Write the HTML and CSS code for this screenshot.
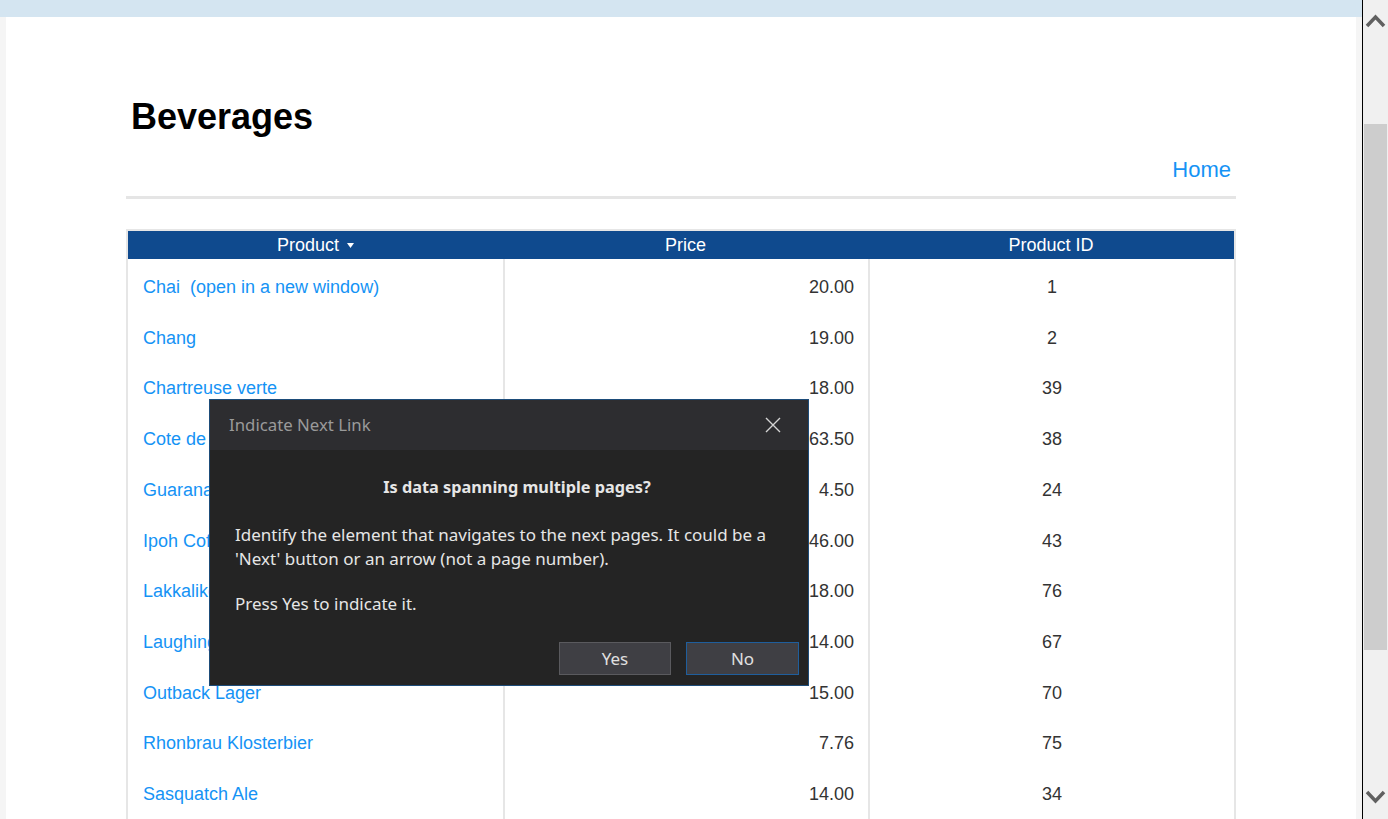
FILE: index.html
```html
<!DOCTYPE html>
<html lang="en">
<head>
<meta charset="utf-8">
<title>Beverages</title>
<link rel="stylesheet" href="styles.css">
</head>
<body>
<div class="window">
  <div class="viewport">
    <div class="topbar"></div>
    <div class="frame">
      <div class="sheet">
        <div class="page">
          <h1 class="title">Beverages</h1>
          <div class="nav"><a class="home" href="#">Home</a></div>
          <div class="rule"></div>
          <div class="grid">
            <div class="hcell">Product<svg class="sort" width="7" height="5" viewBox="0 0 7 5"><path d="M0 0 L7 0 L3.5 5 Z" fill="#fff"/></svg></div>
            <div class="hcell">Price</div>
            <div class="hcell">Product ID</div>

            <div class="cell name"><a href="#">Chai&nbsp; (open in a new window)</a></div><div class="cell price">20.00</div><div class="cell pid">1</div>
            <div class="cell name"><a href="#">Chang</a></div><div class="cell price">19.00</div><div class="cell pid">2</div>
            <div class="cell name"><a href="#">Chartreuse verte</a></div><div class="cell price">18.00</div><div class="cell pid">39</div>
            <div class="cell name"><a href="#">Cote de Blaye</a></div><div class="cell price">263.50</div><div class="cell pid">38</div>
            <div class="cell name"><a href="#">Guarana Fantastica</a></div><div class="cell price">4.50</div><div class="cell pid">24</div>
            <div class="cell name"><a href="#">Ipoh Coffee</a></div><div class="cell price">46.00</div><div class="cell pid">43</div>
            <div class="cell name"><a href="#">Lakkalikoori</a></div><div class="cell price">18.00</div><div class="cell pid">76</div>
            <div class="cell name"><a href="#">Laughing Lumberjack Lager</a></div><div class="cell price">14.00</div><div class="cell pid">67</div>
            <div class="cell name"><a href="#">Outback Lager</a></div><div class="cell price">15.00</div><div class="cell pid">70</div>
            <div class="cell name"><a href="#">Rhonbrau Klosterbier</a></div><div class="cell price">7.76</div><div class="cell pid">75</div>
            <div class="cell name"><a href="#">Sasquatch Ale</a></div><div class="cell price">14.00</div><div class="cell pid">34</div>
            <div class="cell name"></div><div class="cell price"></div><div class="cell pid"></div>
          </div>
        </div>
      </div>
    </div>
  </div>
  <div class="divider"></div>
  <div class="scrollbar">
    <div class="sb-btn">
      <svg width="25" height="40" viewBox="0 0 25 40"><path d="M4 26 L12.5 17 L21 26" fill="none" stroke="#606060" stroke-width="3.5"/></svg>
    </div>
    <div class="thumb"></div>
    <div class="sb-fill"></div>
    <div class="sb-btn">
      <svg width="25" height="40" viewBox="0 0 25 40"><path d="M4 13 L12.5 22 L21 13" fill="none" stroke="#606060" stroke-width="3.5"/></svg>
    </div>
  </div>
</div>

<div class="dialog">
  <div class="dlg-title">
    <span>Indicate Next Link</span>
    <svg class="dlg-close" width="16" height="16" viewBox="0 0 16 16"><path d="M1 1 L15 15 M15 1 L1 15" stroke="#d4d4d4" stroke-width="1.4" fill="none"/></svg>
  </div>
  <div class="dlg-body">
    <p class="dlg-q">Is data spanning multiple pages?</p>
    <p class="dlg-text">Identify the element that navigates to the next pages. It could be a 'Next' button or an arrow (not a page number).</p>
    <p class="dlg-text dlg-press">Press Yes to indicate it.</p>
    <div class="dlg-actions">
      <button class="btn">Yes</button>
      <button class="btn btn-primary">No</button>
    </div>
  </div>
</div>
</body>
</html>
```

FILE: styles.css
```css
* { box-sizing: border-box; }

html, body {
  margin: 0;
  padding: 0;
  height: 819px;
  overflow: hidden;
  background: #ffffff;
  font-family: "Liberation Sans", Arial, sans-serif;
}

.window {
  display: flex;
  width: 1388px;
  height: 819px;
}

.viewport {
  width: 1362px;
  display: flex;
  flex-direction: column;
  overflow: hidden;
}

.topbar {
  height: 17px;
  background: #d4e5f1;
  flex: none;
}

.frame {
  flex: 1;
  background: #f5f5f5;
  padding: 0 6px;
  display: flex;
  overflow: hidden;
}

.sheet {
  flex: 1;
  background: #ffffff;
  padding-top: 79.5px;
  padding-left: 120px;
}

.page {
  width: 1110px;
}

.title {
  margin: 0;
  padding-left: 5px;
  font-size: 36px;
  line-height: 40px;
  font-weight: bold;
  color: #000;
}

.nav {
  margin-top: 20px;
  text-align: right;
  padding-right: 5px;
  line-height: 26px;
  height: 26px;
}

.home {
  font-size: 22px;
  color: #1593f5;
  text-decoration: none;
}

.rule {
  margin-top: 13.6px;
  height: 3px;
  background: #e5e5e5;
}

.grid {
  margin-top: 30px;
  display: grid;
  grid-template-columns: 375px 365px 366px;
  border: 2px solid #e6e6e6;
  border-bottom: none;
  width: 1110px;
}

.hcell {
  height: 28px;
  background: #0f4a8e;
  color: #ffffff;
  font-size: 18px;
  line-height: 28px;
  text-align: center;
  white-space: nowrap;
}

.sort {
  margin-left: 8px;
  vertical-align: 3px;
}

.cell {
  height: 50.7px;
  padding-top: 18px;
  font-size: 18px;
  line-height: 21px;
  color: #333333;
  white-space: nowrap;
}

.name {
  padding-left: 15px;
}

.name a {
  color: #1593f5;
  text-decoration: none;
}

.price {
  border-left: 2px solid #e6e6e6;
  text-align: right;
  padding-right: 14px;
}

.pid {
  border-left: 2px solid #e6e6e6;
  text-align: center;
}

.divider {
  width: 1px;
  background: #000;
  flex: none;
}

.scrollbar {
  width: 25px;
  flex: none;
  background: #f0f0f0;
  display: flex;
  flex-direction: column;
}

.sb-btn {
  height: 40px;
  flex: none;
}

.sb-btn svg { display: block; }

.thumb {
  margin-top: 84px;
  margin-left: 1px;
  width: 23px;
  height: 526px;
  background: #cdcdcd;
  flex: none;
}

.sb-fill { flex: 1; }

/* dialog overlay */
.dialog {
  position: absolute;
  left: 209px;
  top: 399px;
  width: 600px;
  height: 287px;
  border: 1px solid #1d4c79;
  background: #242424;
  font-family: "Noto Sans", "Open Sans", sans-serif;
  display: flex;
  flex-direction: column;
}

.dlg-title {
  height: 50px;
  flex: none;
  background: #2d2d30;
  color: #9a9a9a;
  font-size: 16.8px;
  line-height: 50px;
  padding-left: 19px;
  padding-right: 27px;
  display: flex;
  justify-content: space-between;
  align-items: center;
}

.dlg-close { display: block; }

.dlg-body {
  flex: 1;
  padding: 25px 9px 10px 25px;
  display: flex;
  flex-direction: column;
}

.dlg-body p {
  margin: 0;
  font-size: 17px;
  line-height: 24px;
  color: #e6e6e6;
}

.dlg-body .dlg-q {
  font-weight: bold;
  font-size: 16.3px;
  text-align: center;
}

.dlg-body .dlg-text { margin-top: 24px; }

.dlg-body .dlg-press { margin-top: 21px; }

.dlg-actions {
  margin-top: 26px;
  display: flex;
  justify-content: flex-end;
  gap: 15px;
}

.btn {
  width: 112px;
  height: 33px;
  background: #3f3f44;
  border: 1px solid #5a5a5e;
  color: #e0e0e0;
  font-family: "Noto Sans", "Open Sans", sans-serif;
  font-size: 17px;
  padding: 0;
}

.btn-primary {
  width: 113px;
  border-color: #1f5e9c;
}
```
